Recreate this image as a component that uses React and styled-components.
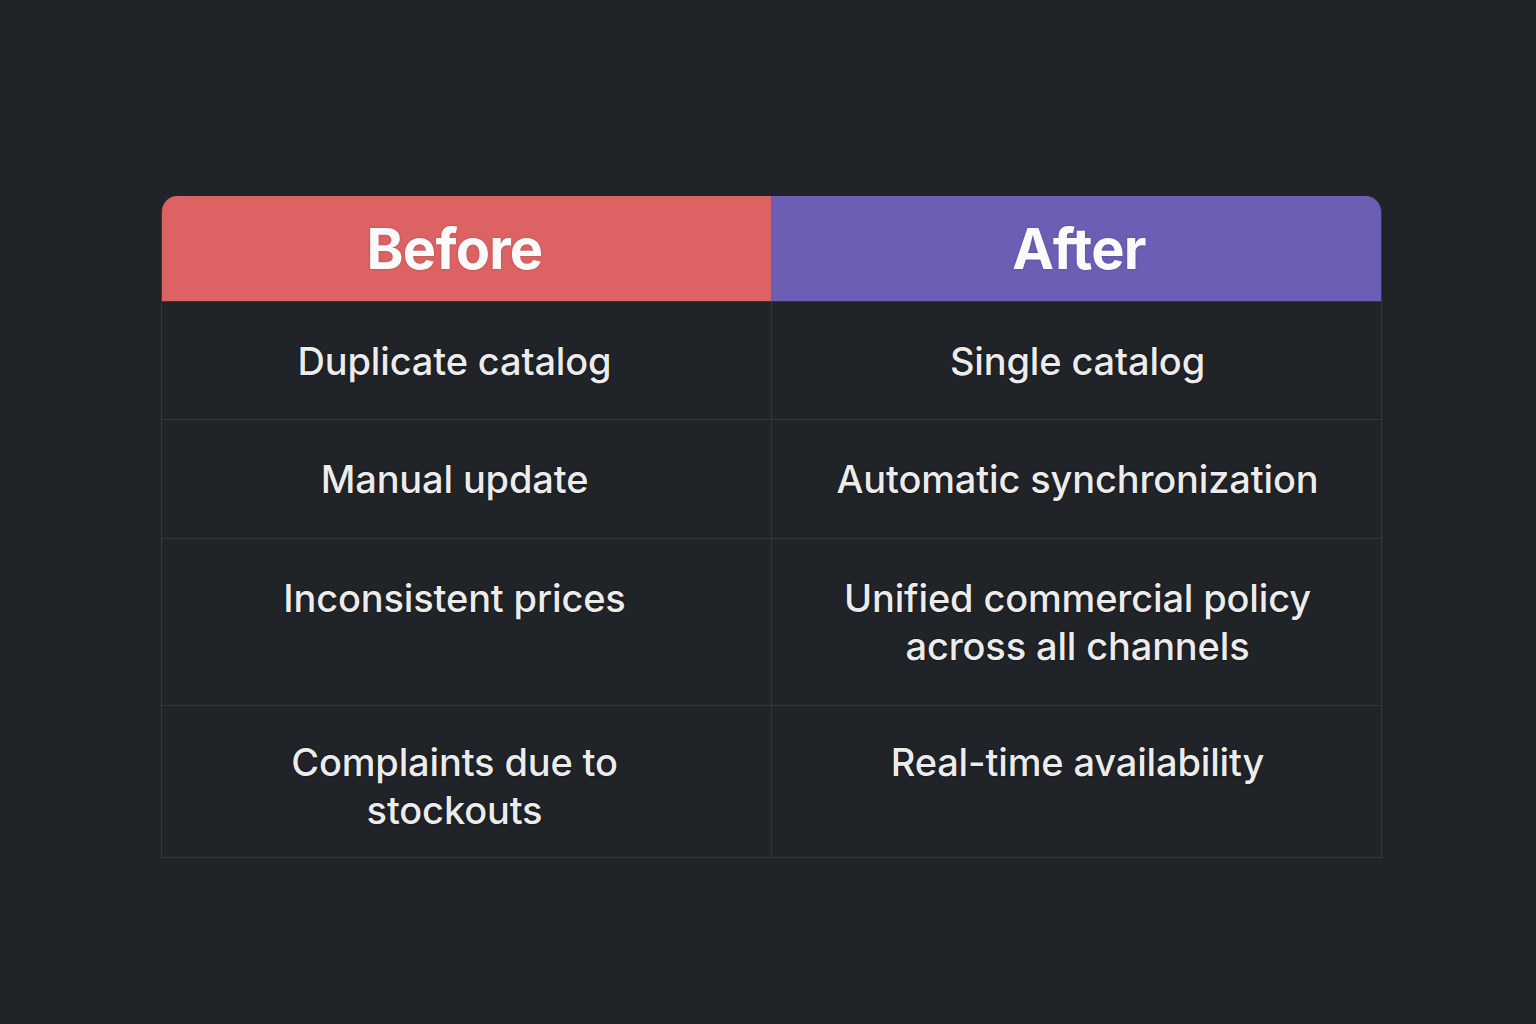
import React from 'react';
import styled, { createGlobalStyle } from 'styled-components';

const rows = [
  { before: 'Duplicate catalog', after: 'Single catalog', h: 118, pad: 35 },
  { before: 'Manual update', after: 'Automatic synchronization', h: 119, pad: 35 },
  { before: 'Inconsistent prices', after: 'Unified commercial policy across all channels', h: 167, pad: 35 },
  { before: 'Complaints due to stockouts', after: 'Real-time availability', h: 152, pad: 32 },
];

function App() {
  return (
    <>
      <GlobalStyle />
      <Page>
        <Table>
          <Head $color="#dc6263" $side="left">Before</Head>
          <Head $color="#6c5db5" $side="right">After</Head>
          {rows.map((r) => (
            <React.Fragment key={r.before}>
              <Cell $h={r.h} $pad={r.pad} $side="left">
                <CellText $w={360}>{r.before}</CellText>
              </Cell>
              <Cell $h={r.h} $pad={r.pad} $side="right">
                <CellText $w={500}>{r.after}</CellText>
              </Cell>
            </React.Fragment>
          ))}
        </Table>
      </Page>
    </>
  );
}

export default App;

const GlobalStyle = createGlobalStyle`
  html, body {
    margin: 0;
    padding: 0;
    background: #202327;
  }
`;

const Page = styled.div`
  width: 1536px;
  height: 1024px;
  padding: 196px 0 0 161px;
  box-sizing: border-box;
  display: flex;
  font-family: Inter, "Noto Sans", sans-serif;
`;

const Table = styled.div`
  width: 1221px;
  height: fit-content;
  display: grid;
  grid-template-columns: 609px 612px;
  border-radius: 16px 16px 0 0;
  border: 1px solid #34373c;
  border-top: none;
  box-sizing: border-box;
  overflow: hidden;
`;

const Head = styled.div`
  height: 105px;
  box-sizing: border-box;
  padding-right: ${(p) => (p.$side === 'left' ? '24px' : '0')};
  padding-left: ${(p) => (p.$side === 'right' ? '4px' : '0')};
  background: ${(p) => p.$color};
  color: #fafafa;
  font-size: 56px;
  font-weight: 700;
  display: flex;
  align-items: center;
  justify-content: center;
  letter-spacing: -0.8px;
  text-shadow: 0 0 2px rgba(0, 0, 0, 0.25);
`;

const Cell = styled.div`
  height: ${(p) => p.$h}px;
  box-sizing: border-box;
  border-top: 1px solid #33363b;
  border-left: ${(p) => (p.$side === 'right' ? '1px solid #33363b' : 'none')};
  display: flex;
  justify-content: center;
  align-items: flex-start;
  padding-top: ${(p) => p.$pad}px;
  padding-right: ${(p) => (p.$side === 'left' ? '24px' : '0')};
`;

const CellText = styled.div`
  max-width: ${(p) => p.$w}px;
  color: #ececec;
  font-size: 38px;
  font-weight: 500;
  line-height: 48px;
  text-align: center;
  letter-spacing: -0.15px;
  text-shadow: 0 0 2px rgba(0, 0, 0, 0.7);
`;
